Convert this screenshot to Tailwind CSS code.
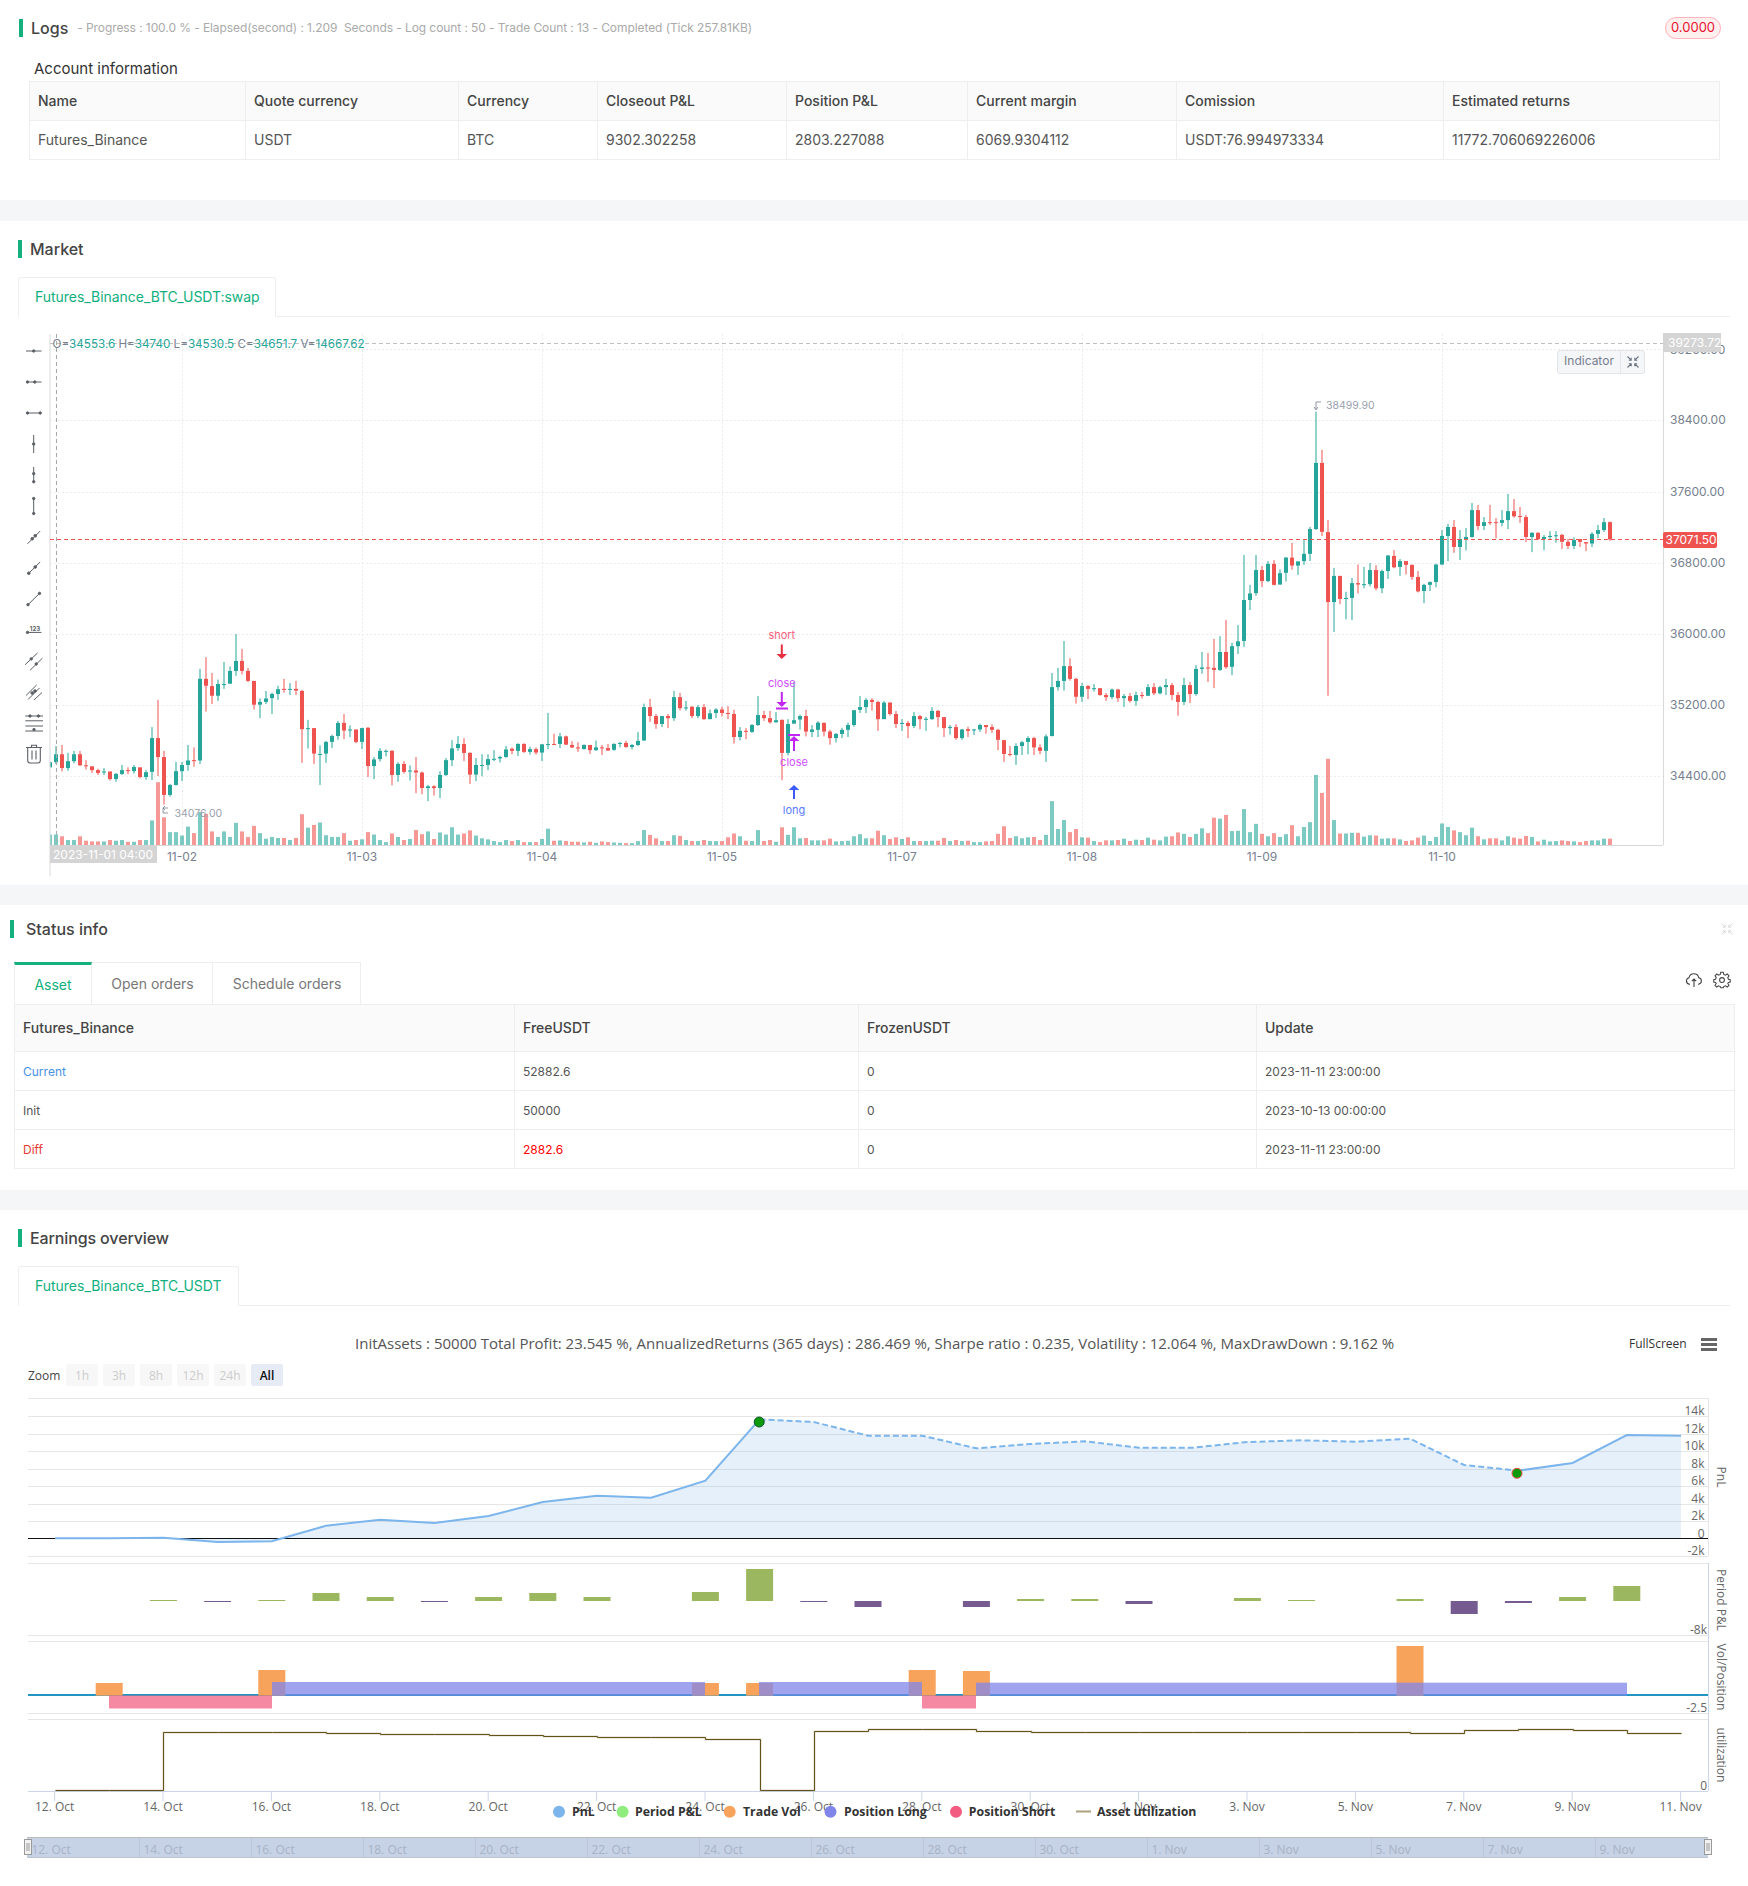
<!DOCTYPE html>
<html lang="en">
<head>
<meta charset="utf-8">
<title>Backtest</title>
<script src="https://cdn.jsdelivr.net/npm/@tailwindcss/browser@4"></script>
</head>
<body class="bg-[#f5f6f8] font-['Inter',sans-serif] text-[#333]">
<div class="w-[1748px] h-[1886px] flex flex-col">

  <section class="bg-white h-[200px] shrink-0">
    <div class="flex items-center pt-[19px] pl-[19px] pr-[27px] h-[37px]">
      <span class="w-[4px] h-[18px] bg-[#14b17f]"></span>
      <h2 class="ml-[8px] text-[16px] leading-[18px] font-medium text-[#444]">Logs</h2>
      <span class="ml-[9px] text-[12px] leading-[18px] tracking-[-0.08px] text-[#aaa] whitespace-pre">- Progress : 100.0 % - Elapsed(second) : 1.209  Seconds - Log count : 50 - Trade Count : 13 - Completed (Tick 257.81KB)</span>
      <span class="ml-auto w-[56px] h-[22px] flex items-center justify-center rounded-[11px] border border-[#ffb3ba] bg-[#fff0f0] text-[13px] text-[#e8112d]">0.0000</span>
    </div>
    <h3 class="mt-[20px] ml-[34px] h-[24px] leading-[24px] text-[15px] text-[#333]">Account information</h3>
    <table class="ml-[29px] w-[1690px] table-fixed border-collapse text-[14px]">
      <colgroup><col class="w-[216px]"><col class="w-[213px]"><col class="w-[139px]"><col class="w-[189px]"><col class="w-[181px]"><col class="w-[209px]"><col class="w-[267px]"><col class="w-[276px]"></colgroup>
      <thead>
        <tr class="h-[39px] bg-[#fafafa] text-left text-[#444]">
          <th class="border border-[#eee] pl-[8px] pr-[8px] pb-[2px] font-medium">Name</th>
          <th class="border border-[#eee] pl-[8px] pr-[8px] pb-[2px] font-medium">Quote currency</th>
          <th class="border border-[#eee] pl-[8px] pr-[8px] pb-[2px] font-medium">Currency</th>
          <th class="border border-[#eee] pl-[8px] pr-[8px] pb-[2px] font-medium">Closeout P&amp;L</th>
          <th class="border border-[#eee] pl-[8px] pr-[8px] pb-[2px] font-medium">Position P&amp;L</th>
          <th class="border border-[#eee] pl-[8px] pr-[8px] pb-[2px] font-medium">Current margin</th>
          <th class="border border-[#eee] pl-[8px] pr-[8px] pb-[2px] font-medium">Comission</th>
          <th class="border border-[#eee] pl-[8px] pr-[8px] pb-[2px] font-medium">Estimated returns</th>
        </tr>
      </thead>
      <tbody>
        <tr class="h-[39px] text-[#555]">
          <td class="border border-[#eee] px-[8px] pb-[1px]">Futures_Binance</td>
          <td class="border border-[#eee] px-[8px] pb-[1px]">USDT</td>
          <td class="border border-[#eee] px-[8px] pb-[1px]">BTC</td>
          <td class="border border-[#eee] px-[8px] pb-[1px]">9302.302258</td>
          <td class="border border-[#eee] px-[8px] pb-[1px]">2803.227088</td>
          <td class="border border-[#eee] px-[8px] pb-[1px]">6069.9304112</td>
          <td class="border border-[#eee] px-[8px] pb-[1px]">USDT:76.994973334</td>
          <td class="border border-[#eee] px-[8px] pb-[1px]">11772.706069226006</td>
        </tr>
      </tbody>
    </table>
  </section>

  <section class="mt-[21px] bg-white h-[664px] shrink-0">
    <div class="flex items-center pt-[19px] pl-[18px] h-[37px]">
      <span class="w-[4px] h-[18px] bg-[#14b17f]"></span>
      <h2 class="ml-[8px] text-[16px] leading-[18px] font-medium text-[#444]">Market</h2>
    </div>
    <div class="mt-[19px] ml-[18px] w-[1712px] h-[40px] flex border-b border-[#eee]">
      <div class="w-[258px] h-[40px] flex items-center pl-[16px] pb-[1px] border border-b-white border-[#eee] rounded-t-[3px] bg-white text-[14px] tracking-[-0.04px] text-[#10b07e]">Futures_Binance_BTC_USDT:swap</div>
    </div>
    <div class="relative h-[568px]">
      <svg id="kline" class="block font-['Inter',sans-serif]" width="1748" height="568" viewBox="0 317 1748 568"></svg>

      <div class="absolute left-[24px] top-[24px] flex flex-col gap-[11px] text-[#5b5f66]">
        <svg class="w-[20px] h-[20px]" viewBox="0 0 20 20" stroke="currentColor" fill="currentColor" stroke-width="1"><path d="M2 10H17.5"/><circle cx="9.7" cy="10" r="1.2"/></svg>
        <svg class="w-[20px] h-[20px]" viewBox="0 0 20 20" stroke="currentColor" fill="currentColor" stroke-width="1"><path d="M2 10H17.5"/><circle cx="3.5" cy="10" r="1.2"/><circle cx="10.8" cy="10" r="1.2"/></svg>
        <svg class="w-[20px] h-[20px]" viewBox="0 0 20 20" stroke="currentColor" fill="currentColor" stroke-width="1"><path d="M3.5 10H16.2"/><circle cx="3.5" cy="10" r="1.2"/><circle cx="16.2" cy="10" r="1.2"/></svg>
        <svg class="w-[20px] h-[20px]" viewBox="0 0 20 20" stroke="currentColor" fill="currentColor" stroke-width="1"><path d="M9.7 1V19"/><circle cx="9.7" cy="10" r="1.2"/></svg>
        <svg class="w-[20px] h-[20px]" viewBox="0 0 20 20" stroke="currentColor" fill="currentColor" stroke-width="1"><path d="M9.7 2V18"/><circle cx="9.7" cy="8.6" r="1.2"/><circle cx="9.7" cy="16.7" r="1.2"/></svg>
        <svg class="w-[20px] h-[20px]" viewBox="0 0 20 20" stroke="currentColor" fill="currentColor" stroke-width="1"><path d="M9.7 2.5V17.5"/><circle cx="9.7" cy="2.5" r="1.2"/><circle cx="9.7" cy="17.5" r="1.2"/></svg>
        <svg class="w-[20px] h-[20px]" viewBox="0 0 20 20" stroke="currentColor" fill="currentColor" stroke-width="1"><path d="M16.2 4L3.5 16.8"/><circle cx="11.2" cy="8.8" r="1.3"/><circle cx="8.2" cy="11.8" r="1.3"/></svg>
        <svg class="w-[20px] h-[20px]" viewBox="0 0 20 20" stroke="currentColor" fill="currentColor" stroke-width="1"><path d="M16.2 4L4.5 15.5"/><circle cx="11.2" cy="9" r="1.3"/><circle cx="4.8" cy="15.2" r="1.3"/></svg>
        <svg class="w-[20px] h-[20px]" viewBox="0 0 20 20" stroke="currentColor" fill="currentColor" stroke-width="1"><path d="M15.5 4.4L4 15.7"/><circle cx="15.5" cy="4.4" r="1.2"/><circle cx="4" cy="15.7" r="1.2"/></svg>
        <svg class="w-[20px] h-[20px]" viewBox="0 0 20 20" stroke="currentColor" fill="currentColor" stroke-width="1"><path d="M3.5 12.4H17.5"/><circle cx="3.5" cy="12.4" r="1.2"/><text x="5.8" y="10.6" font-size="6" font-weight="700" stroke="none">123</text></svg>
        <svg class="w-[20px] h-[20px]" viewBox="0 0 20 20" stroke="currentColor" fill="currentColor" stroke-width="1"><path d="M13.5 2L1 13.8M18.4 7.2L6 19.3"/><circle cx="7.2" cy="7.9" r="1.2"/><circle cx="12.2" cy="13" r="1.2"/></svg>
        <svg class="w-[20px] h-[20px]" viewBox="0 0 20 20" stroke="currentColor" fill="currentColor" stroke-width="1"><path d="M12.6 3L2 13.5M15.5 6L4 17.5M18 10.5L10 18"/><circle cx="8.2" cy="11" r="1.3"/><circle cx="11" cy="9" r="1.3"/></svg>
        <svg class="w-[20px] h-[20px]" viewBox="0 0 20 20" stroke="currentColor" fill="currentColor" stroke-width="1"><path d="M1.3 3H19M1.3 7.8H19M1.3 13H19M1.3 18H19"/><circle cx="6" cy="3" r="1.2"/><circle cx="14.4" cy="3" r="1.2"/><circle cx="10" cy="16.6" r="1.2"/></svg>
        <svg class="w-[20px] h-[20px]" viewBox="0 0 20 20" fill="none" stroke="currentColor" stroke-width="1.1"><path d="M2 3.5H18M7.5 3.5V1.2H12.5V3.5M3.7 3.5V16.5Q3.7 19 6.2 19H13.8Q16.3 19 16.3 16.5V3.5M8 6.5V15.5M12 6.5V15.5"/></svg>
      </div>

      <div class="absolute left-[1557px] top-[33px] w-[88px] h-[24px] flex items-center rounded-[3px] border border-[#e3e5e9] bg-[#f5f6f8] text-[12px] text-[#76808f]">
        <span class="w-[63px] h-full flex items-center justify-center pb-[2px] border-r border-[#e3e5e9]">Indicator</span>
        <span class="flex-1 flex items-center justify-center">
          <svg class="w-[12px] h-[12px]" viewBox="0 0 12 12" fill="none" stroke="#6b7280" stroke-width="1.1"><path d="M.5 .5L3.6 3.6M1.8 4.2H4.2V1.8M11.5 .5L8.4 3.6M10.2 4.2H7.8V1.8M.5 11.5L3.6 8.4M1.8 7.8H4.2V10.2M11.5 11.5L8.4 8.4M10.2 7.8H7.8V10.2"/></svg>
        </span>
      </div>
    </div>
  </section>

  <section class="mt-[20px] bg-white h-[285px] shrink-0">
    <div class="flex items-center pt-[15px] pl-[10px] pr-[15px] h-[33px]">
      <span class="w-[4px] h-[18px] bg-[#14b17f]"></span>
      <h2 class="ml-[12px] text-[16px] leading-[18px] font-medium text-[#444]">Status info</h2>
      <svg class="ml-auto w-[12px] h-[12px]" viewBox="0 0 12 12" fill="none" stroke="#d5d5d5" stroke-width="1"><path d="M.5 .5L3.6 3.6M1.8 4.2H4.2V1.8M11.5 .5L8.4 3.6M10.2 4.2H7.8V1.8M.5 11.5L3.6 8.4M1.8 7.8H4.2V10.2M11.5 11.5L8.4 8.4M10.2 7.8H7.8V10.2"/></svg>
    </div>
    <div class="relative mt-[24px] ml-[14px] w-[1720px] h-[42px] flex text-[14px] text-[#777]">
      <div class="w-[78px] flex items-center justify-center border-t-[3px] border-t-[#14b17f] border-r border-[#eee] text-[#10b07e] border-l border-l-[#eee]">Asset</div>
      <div class="w-[121px] flex items-center justify-center pl-[1px] border-t border-r border-[#eee]">Open orders</div>
      <div class="w-[148px] flex items-center justify-center pl-[1px] border-t border-r border-[#eee]">Schedule orders</div>
      <svg class="absolute left-[1671px] top-[9px] w-[18px] h-[18px]" viewBox="0 0 18 18" fill="none" stroke="#444" stroke-width="1.1"><path d="M5 13.2H4.5A3.3 3.3 0 0 1 4 6.7A5 5 0 0 1 13.8 6.7A3.3 3.3 0 0 1 13.5 13.2H13M9 8V16M6.8 10.2L9 8L11.2 10.2"/></svg>
      <svg class="absolute left-[1699px] top-[9px] w-[18px] h-[18px]" viewBox="0 0 24 24" fill="none" stroke="#444" stroke-width="1.4"><circle cx="12" cy="12" r="3.2"/><path d="M10.3 2.5H13.7L14.3 5.3L16.6 6.3L19 4.8L21.3 7.2L19.7 9.6L20.6 11.8L23 12.4V15.6L20.6 16.2L19.7 17.6L21.3 19.9L19 22.2L16.6 20.6L14.3 21.6L13.7 23H10.3L9.7 21.6L7.4 20.6L5 22.2L2.7 19.9L4.3 17.6L3.4 16.2L1 15.6V12.4L3.4 11.8L4.3 9.6L2.7 7.2L5 4.8L7.4 6.3L9.7 5.3Z" transform="translate(0 -.8)"/></svg>
    </div>
    <table class="ml-[14px] w-[1720px] table-fixed border-collapse text-[12px]">
      <colgroup><col class="w-[500px]"><col class="w-[344px]"><col class="w-[398px]"><col class="w-[478px]"></colgroup>
      <thead>
        <tr class="h-[47px] bg-[#fafafa] text-left text-[14px] text-[#444]">
          <th class="border border-[#eee] px-[8px] pb-[1px] font-medium">Futures_Binance</th>
          <th class="border border-[#eee] px-[8px] pb-[1px] font-medium">FreeUSDT</th>
          <th class="border border-[#eee] px-[8px] pb-[1px] font-medium">FrozenUSDT</th>
          <th class="border border-[#eee] px-[8px] pb-[1px] font-medium">Update</th>
        </tr>
      </thead>
      <tbody class="text-[#555]">
        <tr class="h-[39px]"><td class="border border-[#eee] px-[8px] pt-[2px] text-[#4a90e2]">Current</td><td class="border border-[#eee] px-[8px] pt-[2px]">52882.6</td><td class="border border-[#eee] px-[8px] pt-[2px]">0</td><td class="border border-[#eee] px-[8px] pt-[2px]">2023-11-11 23:00:00</td></tr>
        <tr class="h-[39px]"><td class="border border-[#eee] px-[8px] pt-[2px]">Init</td><td class="border border-[#eee] px-[8px] pt-[2px]">50000</td><td class="border border-[#eee] px-[8px] pt-[2px]">0</td><td class="border border-[#eee] px-[8px] pt-[2px]">2023-10-13 00:00:00</td></tr>
        <tr class="h-[39px]"><td class="border border-[#eee] px-[8px] pt-[2px] text-[#e53935]">Diff</td><td class="border border-[#eee] px-[8px] pt-[2px] text-[#f00]">2882.6</td><td class="border border-[#eee] px-[8px] pt-[2px]">0</td><td class="border border-[#eee] px-[8px] pt-[2px]">2023-11-11 23:00:00</td></tr>
      </tbody>
    </table>
  </section>

  <section class="mt-[20px] bg-white h-[676px] shrink-0">
    <div class="flex items-center pt-[19px] pl-[18px] h-[37px]">
      <span class="w-[4px] h-[18px] bg-[#14b17f]"></span>
      <h2 class="ml-[8px] text-[16px] leading-[18px] font-medium tracking-[-0.12px] text-[#444]">Earnings overview</h2>
    </div>
    <div class="mt-[19px] ml-[18px] w-[1712px] h-[40px] flex border-b border-[#eee]">
      <div class="w-[221px] h-[40px] flex items-center pl-[16px] pb-[1px] border border-b-white border-[#eee] rounded-t-[3px] bg-white text-[14px] tracking-[-0.02px] text-[#10b07e]">Futures_Binance_BTC_USDT</div>
    </div>
    <div class="relative h-[580px] font-['Open_Sans',sans-serif]">
      <svg id="earn" class="block font-['Open_Sans',sans-serif]" width="1748" height="580" viewBox="0 1306 1748 580"></svg>
      <p class="absolute left-[0px] w-[1748px] pl-[355px] top-[27px] text-[15px] leading-[20px] text-[#555] whitespace-pre">InitAssets : 50000 Total Profit: 23.545 %, AnnualizedReturns (365 days) : 286.469 %, Sharpe ratio : 0.235, Volatility : 12.064 %, MaxDrawDown : 9.162 %</p>
      <div class="absolute left-[1629px] top-[29px] flex items-center gap-[14px] text-[12px] text-[#333]">
        <span>FullScreen</span>
        <span class="flex flex-col gap-[2px]"><span class="block w-[16px] h-[3px] bg-[#666]"></span><span class="block w-[16px] h-[3px] bg-[#666]"></span><span class="block w-[16px] h-[3px] bg-[#666]"></span></span>
      </div>
      <div class="absolute left-[28px] top-[58px] flex items-center text-[12px] h-[22px]">
        <span class="w-[38px] text-[#444] pt-[1px]">Zoom</span>
        <div class="flex gap-[5px] text-[#ccc]">
          <span class="w-[32px] h-[22px] flex items-center justify-center pt-[1px] rounded-[2px] bg-[#f7f7f7]">1h</span>
          <span class="w-[32px] h-[22px] flex items-center justify-center pt-[1px] rounded-[2px] bg-[#f7f7f7]">3h</span>
          <span class="w-[32px] h-[22px] flex items-center justify-center pt-[1px] rounded-[2px] bg-[#f7f7f7]">8h</span>
          <span class="w-[32px] h-[22px] flex items-center justify-center pt-[1px] rounded-[2px] bg-[#f7f7f7]">12h</span>
          <span class="w-[32px] h-[22px] flex items-center justify-center pt-[1px] rounded-[2px] bg-[#f7f7f7]">24h</span>
          <span class="w-[32px] h-[22px] flex items-center justify-center pt-[1px] rounded-[2px] bg-[#e6ebf5] text-[#111] font-semibold">All</span>
        </div>
      </div>
    </div>
  </section>
</div>

<script>
(function(){
var D="g,1255,1270,1235,1280,1465 g,1232,1255,1208,1260,1465 r,1232,1272,1205,1282,1470 g,1252,1272,1228,1280,1481 g,1232,1252,1222,1258,1481 r,1232,1264,1222,1266,1470 r,1264,1266,1249,1276,1483 r,1267,1278,1267,1286,1485 r,1278,1286,1274,1292,1485 g,1282,1284,1272,1292,1485 r,1282,1304,1282,1308,1481 g,1289,1304,1286,1312,1483 g,1278,1289,1263,1292,1481 r,1278,1280,1270,1290,1486 g,1269,1281,1263,1288,1486 r,1270,1298,1270,1302,1481 g,1284,1298,1278,1306,1481 g,1185,1283,1153,1307,1424 r,1185,1240,1074,1295,1313 r,1240,1350,1222,1378,1415 g,1321,1350,1318,1355,1458 g,1281,1321,1254,1323,1458 g,1263,1281,1254,1310,1468 g,1250,1263,1205,1280,1442 r,1249,1251,1212,1268,1461 g,1013,1250,984,1260,1400 r,1013,1033,950,1108,1405 r,1034,1062,996,1086,1456 g,1028,1062,1015,1077,1472 g,1028,1030,964,1042,1456 g,990,1027,977,1028,1472 g,961,990,883,1004,1431 r,961,990,926,1000,1456 r,990,1019,981,1022,1472 r,1019,1088,1019,1102,1440 g,1080,1088,1070,1127,1461 g,1070,1080,1048,1086,1477 g,1057,1069,1053,1115,1472 g,1043,1057,1033,1074,1475 r,1042,1045,1013,1053,1475 g,1042,1044,1025,1060,1481 r,1042,1047,1019,1060,1475 r,1048,1159,1045,1257,1406 g,1156,1158,1132,1215,1445 r,1156,1230,1156,1260,1437 g,1231,1233,1206,1321,1430 g,1196,1230,1193,1257,1467 g,1179,1196,1175,1214,1472 g,1141,1179,1135,1190,1472 r,1141,1163,1115,1188,1461 g,1160,1163,1148,1182,1483 r,1160,1196,1160,1200,1481 g,1156,1196,1155,1217,1479 r,1155,1266,1153,1298,1458 g,1247,1266,1240,1304,1465 g,1222,1246,1214,1253,1481 g,1222,1224,1218,1238,1487 r,1222,1292,1220,1322,1462 g,1260,1292,1255,1312,1472 r,1260,1283,1252,1288,1481 g,1279,1282,1264,1308,1478 r,1279,1285,1240,1345,1452 r,1285,1330,1282,1348,1464 g,1325,1330,1321,1368,1456 r,1325,1330,1322,1352,1478 g,1292,1330,1281,1359,1459 g,1249,1292,1243,1295,1465 g,1215,1249,1191,1266,1444 g,1202,1214,1179,1222,1465 r,1202,1228,1185,1252,1462 r,1228,1291,1226,1318,1453 g,1263,1291,1243,1310,1468 g,1263,1265,1232,1296,1476 g,1246,1263,1232,1278,1479 g,1245,1248,1220,1252,1484 g,1240,1244,1236,1256,1487 g,1218,1240,1208,1242,1481 r,1216,1222,1212,1232,1484 g,1202,1222,1200,1237,1481 r,1202,1225,1200,1228,1487 g,1217,1225,1210,1233,1487 r,1217,1227,1212,1233,1487 g,1203,1227,1203,1252,1478 g,1202,1204,1112,1217,1448 r,1202,1204,1172,1204,1483 g,1180,1202,1170,1214,1482 r,1180,1204,1178,1205,1484 r,1205,1212,1194,1214,1486 r,1212,1215,1197,1225,1486 g,1205,1217,1203,1218,1488 r,1205,1220,1205,1231,1486 g,1212,1220,1192,1222,1489 r,1212,1214,1205,1234,1485 r,1214,1221,1202,1222,1487 g,1202,1219,1200,1222,1488 g,1199,1201,1196,1212,1489 r,1199,1211,1193,1213,1490 g,1205,1211,1202,1218,1490 g,1193,1205,1167,1208,1484 g,1095,1192,1085,1193,1452 r,1095,1121,1071,1138,1466 r,1121,1144,1115,1158,1476 g,1121,1144,1121,1153,1484 r,1121,1127,1115,1156,1484 g,1066,1127,1048,1135,1467 r,1066,1098,1054,1105,1469 g,1096,1098,1077,1105,1481 r,1094,1121,1092,1127,1484 g,1095,1121,1089,1127,1484 r,1095,1130,1086,1132,1481 g,1113,1130,1102,1130,1484 g,1102,1112,1098,1127,1484 r,1102,1112,1094,1122,1484 r,1112,1114,1092,1130,1473 r,1115,1182,1103,1201,1462 g,1164,1182,1153,1192,1470 r,1164,1166,1156,1188,1483 g,1147,1167,1144,1170,1484 g,1118,1147,1063,1150,1452 r,1118,1127,1106,1135,1484 r,1127,1139,1106,1143,1481 g,1133,1139,1109,1140,1486 r,1132,1228,1131,1307,1444 g,1144,1228,1130,1235,1466 g,1133,1143,1022,1143,1444 g,1121,1131,1117,1160,1476 r,1121,1166,1103,1180,1475 g,1160,1167,1147,1182,1482 g,1140,1161,1136,1182,1482 r,1141,1166,1139,1180,1482 r,1166,1185,1161,1204,1477 g,1173,1185,1170,1198,1485 g,1161,1173,1155,1185,1484 g,1147,1161,1140,1182,1483 g,1104,1147,1104,1152,1470 g,1095,1103,1063,1112,1464 g,1074,1095,1069,1112,1476 r,1074,1080,1069,1105,1476 r,1080,1130,1077,1164,1454 g,1082,1130,1077,1130,1467 r,1082,1115,1080,1120,1478 r,1115,1144,1106,1156,1473 g,1141,1144,1130,1164,1478 r,1141,1150,1135,1185,1473 g,1121,1150,1109,1156,1484 r,1121,1130,1118,1159,1484 g,1129,1132,1123,1164,1484 g,1106,1130,1095,1132,1483 r,1106,1124,1103,1153,1483 r,1124,1156,1124,1182,1475 g,1153,1156,1147,1175,1484 r,1153,1185,1145,1190,1481 g,1160,1185,1158,1190,1484 r,1159,1164,1152,1182,1483 g,1160,1163,1158,1176,1487 g,1147,1160,1143,1167,1487 r,1147,1153,1147,1172,1485 r,1153,1161,1145,1170,1484 r,1161,1190,1158,1220,1463 r,1191,1231,1190,1254,1441 r,1231,1234,1208,1238,1475 g,1208,1234,1200,1263,1470 g,1197,1208,1193,1234,1476 g,1185,1196,1180,1232,1473 r,1185,1212,1181,1234,1472 r,1212,1222,1203,1232,1481 g,1180,1222,1174,1254,1466 g,1037,1179,996,1180,1368 g,1019,1037,981,1047,1449 g,976,1019,903,1047,1423 r,976,1013,953,1018,1458 r,1013,1065,1010,1085,1449 g,1034,1065,1025,1080,1473 r,1034,1042,1031,1072,1474 g,1040,1043,1028,1050,1484 r,1040,1060,1040,1062,1487 r,1060,1066,1054,1077,1482 g,1044,1066,1041,1072,1482 r,1044,1069,1042,1080,1481 g,1063,1069,1057,1095,1477 r,1063,1077,1054,1082,1484 g,1060,1077,1050,1091,1480 r,1060,1063,1051,1070,1481 g,1037,1062,1028,1063,1474 r,1037,1055,1025,1060,1480 g,1037,1055,1033,1058,1482 g,1031,1037,1013,1060,1471 r,1031,1060,1025,1075,1470 r,1060,1080,1051,1120,1459 g,1031,1080,1010,1089,1463 r,1031,1057,1022,1083,1472 g,984,1057,973,1062,1463 g,980,984,935,998,1447 r,980,983,938,1022,1461 r,981,987,897,1040,1416 g,935,987,889,990,1419 r,935,979,842,984,1408 g,918,978,908,1002,1455 g,904,918,857,941,1454 g,784,903,653,920,1391 g,765,784,740,813,1458 g,697,764,653,772,1434 r,697,729,685,746,1463 g,679,729,671,732,1470 r,679,740,668,742,1461 g,706,739,695,740,1472 g,661,705,659,730,1464 r,661,684,618,696,1438 g,672,684,672,711,1470 g,650,671,610,682,1443 g,578,650,572,671,1429 g,386,578,237,581,1292 r,386,586,348,598,1344 r,587,790,552,1062,1245 g,714,790,691,877,1423 r,714,781,714,796,1462 g,778,781,760,840,1462 g,735,778,720,842,1460 r,735,739,681,765,1460 g,738,740,688,750,1471 g,697,738,677,745,1467 r,697,750,683,756,1468 g,700,750,696,764,1477 g,655,700,653,723,1476 r,656,689,639,692,1476 g,671,688,665,714,1479 r,671,682,671,710,1484 r,682,717,681,725,1482 r,717,759,700,762,1474 g,740,758,737,793,1468 g,732,740,730,758,1484 g,681,732,679,747,1472 g,598,681,581,683,1433 g,572,598,563,671,1443 r,572,630,552,647,1453 g,607,630,581,668,1458 g,601,607,575,640,1467 g,523,601,502,603,1445 r,523,569,508,581,1470 g,558,569,543,581,1479 r,558,560,508,566,1476 r,558,560,546,605,1476 g,552,560,523,570,1482 g,526,552,476,578,1470 r,526,541,491,545,1474 r,540,542,514,560,1477 r,543,601,537,616,1469 g,589,601,587,645,1472 r,589,607,587,610,1485 g,601,607,595,639,1480 g,598,601,584,607,1485 g,596,598,584,618,1484 r,595,615,592,636,1482 r,615,627,606,636,1484 g,610,627,602,636,1485 r,607,615,607,630,1487 r,616,620,616,642,1484 g,592,620,587,630,1482 g,581,592,566,604,1482 g,558,581,546,587,1477 r,558,608,556,612,1477".split(" ");
function Y(z){return 330+z/2.9037}
var s=[];
function line(x1,y1,x2,y2,c,d,w){s.push('<line x1="'+x1+'" y1="'+y1+'" x2="'+x2+'" y2="'+y2+'" stroke="'+c+'"'+(d?' stroke-dasharray="'+d+'"':'')+' stroke-width="'+(w||1)+'"/>')}
function rect(x,y,w,h,c,o){s.push('<rect x="'+x+'" y="'+y+'" width="'+w+'" height="'+h+'" fill="'+c+'"'+(o?' fill-opacity="'+o+'"':'')+'/>')}
function text(x,y,t,c,fs,a,extra){s.push('<text x="'+x+'" y="'+y+'" fill="'+c+'" font-size="'+fs+'" dominant-baseline="central"'+(a?' text-anchor="'+a+'"':'')+(extra||'')+'>'+t+'</text>')}
var gridH=[349.5,420.5,492.5,563.5,634.5,705.5,776.5],gridV=[182.5,362.5,542.5,722.5,902.5,1082.5,1262.5,1442.5];
gridH.forEach(function(y){line(50,y,1663,y,'#ececec','2,2')});
gridV.forEach(function(x){line(x,334,x,845,'#ececec','2,2')});
D.forEach(function(r,i){
  var p=r.split(","),c=p[0]=="g"?"#26a69a":"#ef5350",x=50+6*i;
  var t=+p[1],b=+p[2],wt=+p[3],wb=+p[4],v=+p[5];
  var vx=Math.max(50,x-2),bw=x-2<50?2:4;
  rect(vx,Y(v),bw,845-Y(v),c,0.6);
  if(i>0)rect(x-0.5,Y(wt),1,Y(wb)-Y(wt),c);
  rect(vx,Y(t),bw,Math.max(1,Y(b)-Y(t)),c);
});
line(50,334,50,876,'#d9d9d9');
line(1663.5,334,1663.5,845,'#d9d9d9');
line(50,845.5,1663,845.5,'#d9d9d9');
line(50,343.5,1663,343.5,'#bfbfbf','4,3');
line(56.5,334,56.5,845,'#a8a8a8','4,3');
line(50,539.5,1663,539.5,'#ef5350','4,3');
s.push('<text x="52.5" y="344" font-size="11.65" fill="#76808f" dominant-baseline="central">O=<tspan fill="#26a69a">34553.6</tspan> H=<tspan fill="#26a69a">34740</tspan> L=<tspan fill="#26a69a">34530.5</tspan> C=<tspan fill="#26a69a">34651.7</tspan> V=<tspan fill="#26a69a">14667.62</tspan></text>');
[["39200.00",349],["38400.00",419.5],["37600.00",491.5],["36800.00",562.5],["36000.00",633.5],["35200.00",704.5],["34400.00",775.5]].forEach(function(a){text(1670,a[1],a[0],'#76808f',12)});
rect(1663,333,58,19,'#d4d4d4');
text(1668,342.5,"39273.72",'#fff',12);
s.push('<rect x="1663" y="532" width="54" height="16" rx="2" fill="#ef5350"/>');
text(1665.5,539.5,"37071.50",'#fff',12);
[["11-02",182],["11-03",362],["11-04",542],["11-05",722],["11-07",902],["11-08",1082],["11-09",1262],["11-10",1442]].forEach(function(a){text(a[1],856.5,a[0],'#76808f',12,'middle')});
rect(50,845,107,18,'#d4d4d4');
text(53,854.5,"2023-11-01 04:00",'#fff',12);
s.push('<path d="M163 808H168M165 806L163 808L165 810M163 808V813H168" fill="none" stroke="#76808f" stroke-width="0.8"/>');
text(174.5,813,"34076.00",'#9aa1ad',10.5);
s.push('<path d="M1321 402H1316V409M1314 407L1316 410L1318 407" fill="none" stroke="#76808f" stroke-width="0.8"/>');
text(1326,405.5,"38499.90",'#9aa1ad',10.5);
text(781.8,635,"short",'#f4607a',11,'middle');
s.push('<path d="M781.8 644.5V654" stroke="#e6303f" stroke-width="2"/><path d="M776.5 654H787L781.8 659Z" fill="#e6303f"/>');
text(781.8,683,"close",'#d050ff',11,'middle');
s.push('<path d="M781.8 692V702" stroke="#c026f0" stroke-width="2"/><path d="M776.5 702H787L781.8 707Z" fill="#c026f0"/><rect x="776" y="707.5" width="12" height="2" fill="#c026f0"/>');
text(794,762,"close",'#d050ff',11,'middle');
s.push('<path d="M794 741V751" stroke="#c026f0" stroke-width="2"/><path d="M788.7 741H799.3L794 736Z" fill="#c026f0"/><rect x="788" y="734" width="12" height="2" fill="#c026f0"/>');
text(794,810,"long",'#5b7cff',11,'middle');
s.push('<path d="M794 789V799" stroke="#3b5bfb" stroke-width="2"/><path d="M788.7 790H799.3L794 785Z" fill="#3b5bfb"/>');
document.getElementById('kline').innerHTML=s.join('');

s=[];
function Z1(z){return 1220+z/3}
function Z2(z){return 1550+z/3}
function X(k){return 55+54.2*k}
[1398.5,1416.5,1434.5,1451.5,1469.5,1486.5,1504.5,1521.5,1556.5].forEach(function(y){line(28,y,1708,y,'#e6e6e6')});
[1563.5,1635.5,1641.5,1713.5,1719.5].forEach(function(y){line(28,y,1708,y,'#e6e6e6')});
var P=[955,955,953,966,964,917,899,909,888,846,827,833,782,598,606,647,647,685,672,664,683,683,666,661,665,656,735,752,729,645,647];
var pts=P.map(function(z,k){return X(k)+','+Z1(z)});
s.push('<polygon points="'+X(0)+','+Z1(956)+' '+pts.join(' ')+' '+X(30)+','+Z1(956)+'" fill="#7cb5ec" fill-opacity="0.2"/>');
line(28,1538.5,1708,1538.5,'#111');
s.push('<polyline points="'+pts.slice(0,14).join(' ')+'" fill="none" stroke="#7cb5ec" stroke-width="2"/>');
s.push('<polyline points="'+pts.slice(13,28).join(' ')+'" fill="none" stroke="#7cb5ec" stroke-width="2" stroke-dasharray="6,3"/>');
s.push('<polyline points="'+pts.slice(27).join(' ')+'" fill="none" stroke="#7cb5ec" stroke-width="2"/>');
s.push('<circle cx="759.2" cy="1422" r="5" fill="#0a9a0a" stroke="#14532d" stroke-width="1"/>');
s.push('<circle cx="1517" cy="1473.3" r="5" fill="#0a9a0a" stroke="#f04a4a" stroke-width="1"/>');
[["14k",1410],["12k",1428],["10k",1445],["8k",1463],["6k",1480],["4k",1498],["2k",1515],["0",1533],["-2k",1550]].forEach(function(a){text(1704.5,a[1],a[0],'#666',12,'end')});
var G=[[2,150,153],[4,150,153],[5,129,153],[6,141,153],[8,141,153],[9,129,153],[10,141,153],[12,126,153],[13,57,153],[18,147,153],[19,147,153],[22,144,153],[23,150,153],[25,147,153],[28,141,153],[29,108,153]];
var V=[[3,153,156],[7,153,156],[14,153,156],[15,153,171],[17,153,171],[20,153,162],[26,153,192],[27,153,159]];
G.forEach(function(b){rect(X(b[0])-13.5,Z2(b[1]),27,Z2(b[2])-Z2(b[1]),'#9bb860')});
V.forEach(function(b){rect(X(b[0])-13.5,Z2(b[1]),27,Z2(b[2])-Z2(b[1]),'#765b91')});
text(1707,1629,"-8k",'#666',12,'end');
rect(28,1694,1680,2,'#2196c4');
[[1,399],[4,360],[12,399],[13,399],[16,360],[17,363],[25,288]].forEach(function(b){rect(X(b[0])-13.5,Z2(b[1]),27,Z2(437)-Z2(b[1]),'#f7a35c')});
[[109,272],[922,976]].forEach(function(b){rect(b[0],1695.5,b[1]-b[0],13,'#f15c80',0.72)});
[[272,705,396],[759,922,396],[976,1627,398]].forEach(function(b){rect(b[0],Z2(b[2]),b[1]-b[0],Z2(437)-Z2(b[2]),'#8085e9',0.75)});
text(1707,1707,"-2.5",'#666',12,'end');
line(28,1791.5,1708,1791.5,'#ccd6eb');
var U=[722,722,546,545,545,550,553,551,554,559,562,560,567,722,542,538,537,543,546,547,545,545,547,547,546,548,539,537,540,549];
function Sx(v){return Math.round(v)+.5}
var d='M'+Sx(X(0))+' '+Sx(Z2(720));
U.forEach(function(z,k){var q=z==722?720:z;d+=' V'+Sx(Z2(q))+' H'+Sx(X(k+1))});
s.push('<path d="'+d+'" fill="none" stroke="#aba27d" stroke-width="2" stroke-opacity="0.45"/><path d="'+d+'" fill="none" stroke="#62531a" stroke-width="1"/>');
text(1707,1785,"0",'#666',12,'end');
line(1708.5,1398,1708.5,1556,'#e6e6e6');
line(1708.5,1563,1708.5,1791,'#ccd6eb');
[["PnL",1477],["Period P&amp;L",1600],["Vol/Position",1677],["utilization",1755]].forEach(function(a){s.push('<text transform="rotate(90 1721 '+a[1]+')" x="1721" y="'+a[1]+'" fill="#666" font-size="12" text-anchor="middle" dominant-baseline="central">'+a[0]+'</text>')});
var T=["12. Oct","14. Oct","16. Oct","18. Oct","20. Oct","22. Oct","24. Oct","26. Oct","28. Oct","30. Oct","1. Nov","3. Nov","5. Nov","7. Nov","9. Nov","11. Nov"];
T.forEach(function(t,i){var x=54.6+108.4*i;line(x,1791,x,1801,'#ccd6eb');text(x,1806,t,'#666',12,'middle')});
[[559,"PnL",572,"#7cb5ec"],[622.6,"Period P&amp;L",635,"#90ed7d"],[729.7,"Trade Vol",743,"#f7a35c"],[830.5,"Position Long",844,"#8085e9"],[956,"Position Short",968.8,"#f15c80"]].forEach(function(a){
  s.push('<circle cx="'+a[0]+'" cy="1811.7" r="6" fill="'+a[3]+'"/>');
  text(a[2],1811.7,a[1],'#333',12.3,'',' font-weight="700"');
});
line(1076,1811.5,1091,1811.5,'#aba27d','',2);
text(1097,1811.7,"Asset utilization",'#333',12.3,'',' font-weight="700"');
rect(27,1837,1681,21,'#c6d2e5');
line(27,1837.5,1708,1837.5,'#bbb');
line(27,1857.5,1708,1857.5,'#bdc4cf');
var NT=["12. Oct","14. Oct","16. Oct","18. Oct","20. Oct","22. Oct","24. Oct","26. Oct","28. Oct","30. Oct","1. Nov","3. Nov","5. Nov","7. Nov","9. Nov"];
NT.forEach(function(t,i){var x=27.4+112*i;if(i>0)line(x,1838,x,1857,'#b9c6da');text(x+4,1849,t,'#a7b3c6',12)});
[[24,1839],[1704,1839]].forEach(function(h){
  s.push('<rect x="'+(h[0]+.5)+'" y="1839.5" width="7" height="15" fill="#f2f2f2" stroke="#999"/>');
  line(h[0]+3,1843,h[0]+3,1851,'#999');line(h[0]+5,1843,h[0]+5,1851,'#999');
});
document.getElementById('earn').innerHTML=s.join('');
})();
</script>
</body>
</html>
